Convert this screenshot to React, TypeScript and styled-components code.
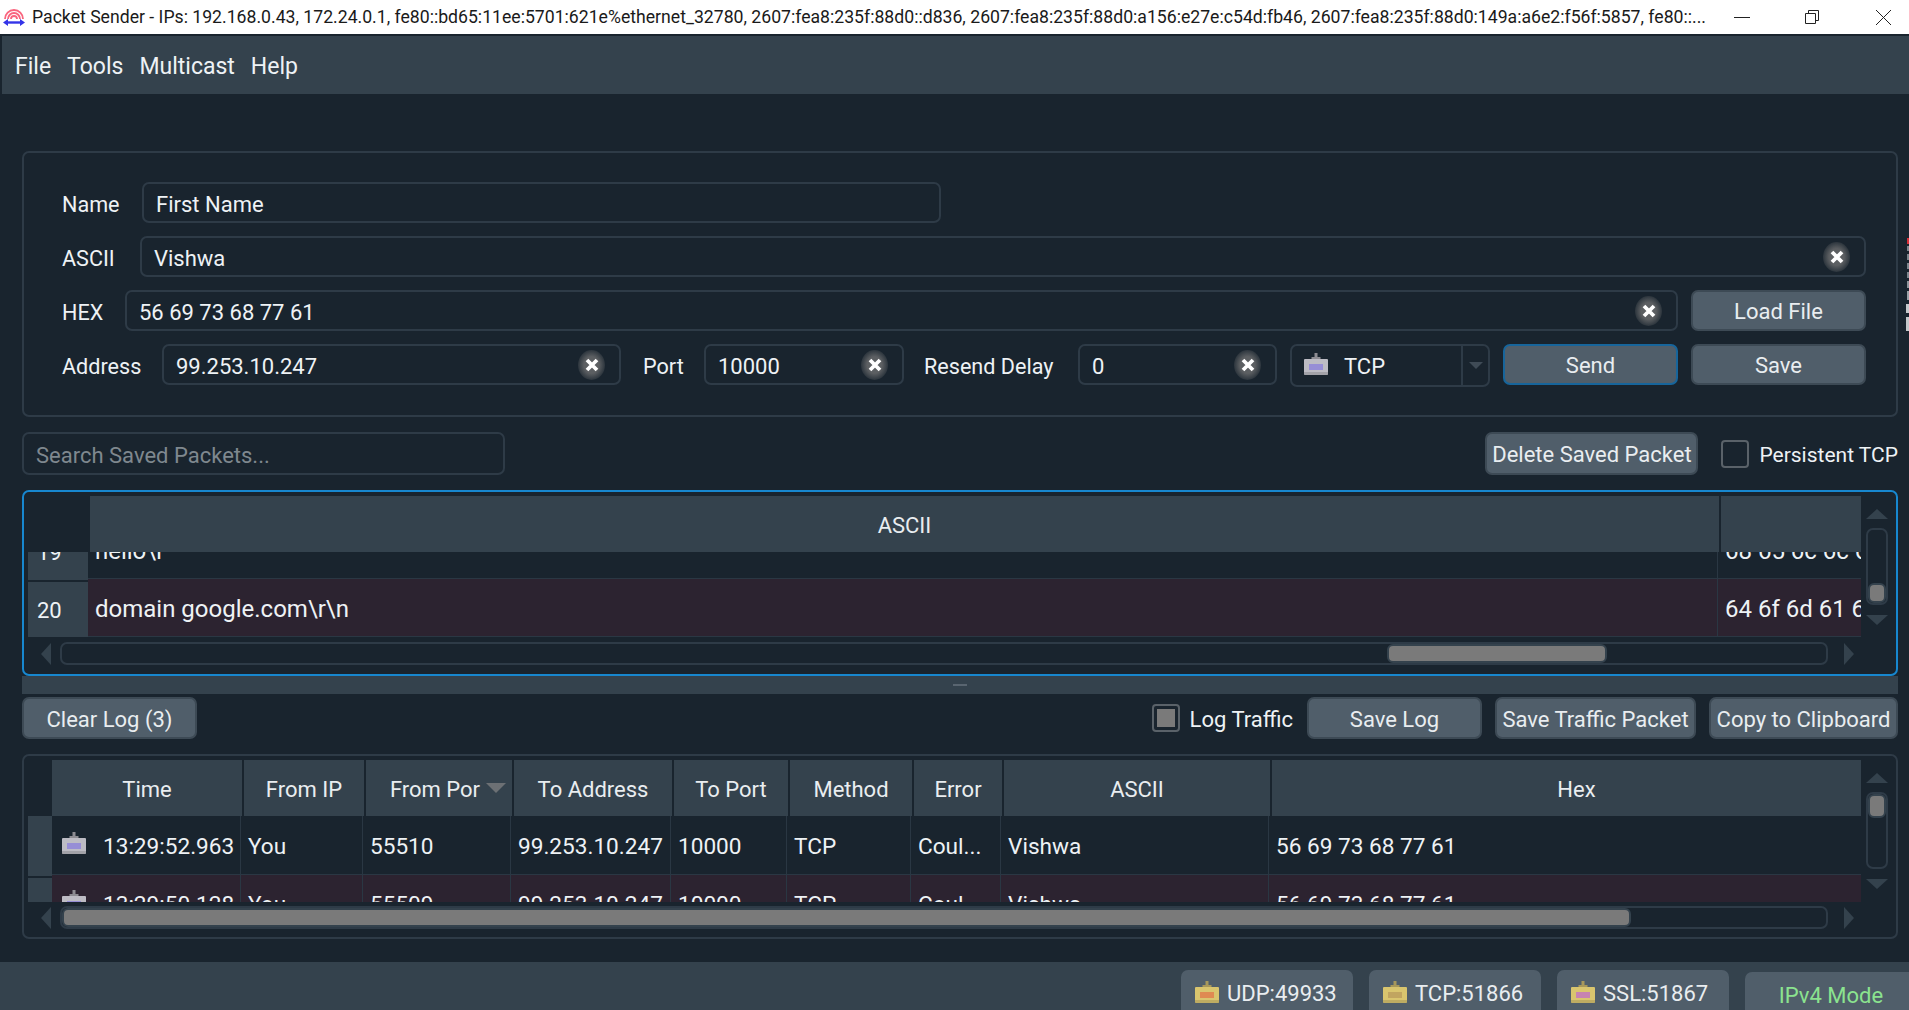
import React from 'react';
import styled, { createGlobalStyle } from 'styled-components';

const PANEL = '#34424d';
const BG = '#19242e';
const LINE = '#2e3b47';
const BTN = '#505e6a';
const TEXT = '#eef2f5';

const GlobalStyle = createGlobalStyle`
    html, body {
        margin: 0;
        padding: 0;
        background: ${BG};
        overflow: hidden;
    }
    * {
        box-sizing: border-box;
    }
`;

const Page = styled.div`
    position: relative;
    width: 1909px;
    height: 1010px;
    display: flex;
    flex-direction: column;
    overflow: hidden;
    background: ${BG};
    color: ${TEXT};
    font-family: Roboto, 'Liberation Sans', sans-serif;
    font-size: 22px;
`;

const TitleBar = styled.div`
    height: 34px;
    flex: none;
    display: flex;
    align-items: center;
    background: #fff;
    color: #1a1a1a;
    font-size: 17.65px;
    padding-left: 3px;
`;

const TitleText = styled.span`
    margin-left: 7px;
    width: 1687px;
    white-space: nowrap;
    overflow: hidden;
`;

const WindowButton = styled.svg`
    flex: none;
    width: 17px;
    height: 17px;
    margin-left: ${({ $ml }: { $ml: number }) => $ml}px;
    fill: none;
    stroke: #222;
    stroke-width: 1;
`;

const MenuBar = styled.div`
    height: 58px;
    flex: none;
    margin: 2px 0 0 2px;
    padding: 2px 0 0 13px;
    display: flex;
    align-items: center;
    gap: 16px;
    background: ${PANEL};
    font-size: 23px;
`;

const Main = styled.div`
    display: flex;
    flex-direction: column;
    padding: 57px 11px 0 22px;
`;

const GroupBox = styled.div`
    height: 266px;
    border: 2px solid ${LINE};
    border-radius: 7px;
    padding: 29px 30px 0 38px;
    display: flex;
    flex-direction: column;
    gap: 13px;
`;

const FormRow = styled.div`
    display: flex;
    align-items: flex-start;
    gap: 13px;
    height: 41px;
`;

const FieldLabel = styled.span<{ $w: number; $ml?: number }>`
    flex: none;
    width: ${({ $w }) => $w}px;
    margin-left: ${({ $ml }) => $ml ?? 0}px;
    font-size: 21.6px;
    line-height: 45px;
    white-space: nowrap;
`;

const TextBox = styled.div<{ $w?: number; $h?: number }>`
    flex: ${({ $w }) => ($w ? `none` : 1)};
    width: ${({ $w }) => ($w ? `${$w}px` : 'auto')};
    height: ${({ $h }) => $h ?? 41}px;
    display: flex;
    align-items: center;
    padding: 0 14px 0 12px;
    border: 2px solid ${LINE};
    border-radius: 7px;
`;

const BoxValue = styled.span`
    flex: 1;
    padding-top: 4px;
    white-space: nowrap;
`;

const Placeholder = styled(BoxValue)`
    color: #7f888f;
`;

const ClearGlow = styled.span`
    flex: none;
    width: 27px;
    height: 30px;
    border-radius: 50%;
    display: flex;
    align-items: center;
    justify-content: center;
    background: radial-gradient(closest-side, #5c5f62 55%, #2c353d 100%);
`;

const Button = styled.div<{ $w: number; $h?: number; $focus?: boolean }>`
    flex: none;
    width: ${({ $w }) => $w}px;
    height: ${({ $h }) => $h ?? 41}px;
    padding-top: 2px;
    display: flex;
    align-items: center;
    justify-content: center;
    background: ${BTN};
    border: 2px solid ${({ $focus }) => ($focus ? '#17659b' : '#3d4a55')};
    border-radius: 7px;
    color: #e9edf0;
    white-space: nowrap;
`;

const Combo = styled.div`
    flex: none;
    width: 200px;
    height: 43px;
    display: flex;
    align-items: center;
    border: 2px solid ${LINE};
    border-radius: 7px;
    padding-left: 12px;
`;

const ComboLabel = styled.span`
    flex: 1;
    margin-left: 16px;
    padding-top: 2px;
`;

const ComboArrow = styled.span`
    flex: none;
    width: 27px;
    height: 100%;
    border-left: 2px solid ${LINE};
    display: flex;
    align-items: center;
    justify-content: center;

    &::after {
        content: '';
        border-left: 7px solid transparent;
        border-right: 7px solid transparent;
        border-top: 7px solid #3f4b56;
    }
`;

const SearchRow = styled.div`
    margin-top: 15px;
    height: 43px;
    display: flex;
    align-items: center;
`;

const Spacer = styled.div`
    flex: 1;
`;

const CheckBox = styled.span<{ $checked?: boolean }>`
    flex: none;
    width: 28px;
    height: 28px;
    margin-left: ${({ $checked }) => ($checked ? 0 : 23)}px;
    border: 2px solid #5a6269;
    border-radius: 4px;
    padding: 3px;

    &::after {
        content: '';
        display: ${({ $checked }) => ($checked ? 'block' : 'none')};
        height: 100%;
        background: #7a7a7a;
    }
`;

const CheckLabel = styled.span<{ $size?: number }>`
    flex: none;
    margin-left: 10px;
    padding-top: 2px;
    font-size: ${({ $size }) => $size ?? 22}px;
    white-space: nowrap;
`;

const TableBox = styled.div<{ $focus?: boolean; $h: number }>`
    height: ${({ $h }) => $h}px;
    margin-top: 15px;
    border: 2px solid ${({ $focus }) => ($focus ? '#1787cf' : LINE)};
    border-radius: 7px;
    padding: 4px 8px 0 4px;
    display: flex;
    flex-direction: column;
`;

const TableTop = styled.div`
    display: flex;
    gap: 5px;
`;

const Viewport = styled.div<{ $h: number }>`
    flex: none;
    width: 1833px;
    height: ${({ $h }) => $h}px;
    display: flex;
    flex-direction: column;
    overflow: hidden;
`;

const HeaderRow = styled.div`
    flex: none;
    height: 56px;
    display: flex;
    position: relative;
    z-index: 1;
    background: ${BG};
`;

const Corner = styled.div<{ $w: number }>`
    flex: none;
    width: ${({ $w }) => $w}px;
`;

const HeaderCell = styled.div<{ $w: number; $shift?: number }>`
    position: relative;
    flex: ${({ $w }) => ($w ? 'none' : 1)};
    width: ${({ $w }) => $w}px;
    margin-right: 2px;
    padding: 2px 0 0 ${({ $shift }) => $shift ?? 0}px;
    background: ${PANEL};
    display: flex;
    align-items: center;
    justify-content: center;
    color: #e9edf0;
    white-space: nowrap;
    &:last-child {
        margin-right: 0;
    }
`;

const SortArrow = styled.span`
    position: absolute;
    right: 6px;
    top: 23px;
    border-left: 10px solid transparent;
    border-right: 10px solid transparent;
    border-top: 10px solid #6c7074;
`;

const HeaderOffset = styled.span`
    margin-right: 8px;
`;

const Body = styled.div<{ $size: number }>`
    flex: 1;
    min-height: 0;
    font-size: ${({ $size }) => $size}px;
`;

const Row = styled.div<{ $error?: boolean }>`
    height: 58px;
    display: flex;
    --row-bg: ${({ $error }) => ($error ? '#2c2330' : BG)};
`;

const SavedRow = styled(Row)`
    &:first-child {
        margin-top: -31px;
    }
`;

const LogRow = styled(Row)`
    &:first-child {
        height: 59px;
    }
    &:first-child > :first-child {
        margin-top: 0;
    }
`;

const RowHead = styled.div<{ $w: number }>`
    flex: none;
    width: ${({ $w }) => $w}px;
    margin: 3px 0 -1px;
    padding-left: 9px;
    background: ${PANEL};
    display: flex;
    align-items: center;
    font-size: 22px;
`;

const Cell = styled.div<{ $w: number }>`
    flex: ${({ $w }) => ($w ? 'none' : 1)};
    width: ${({ $w }) => $w}px;
    min-width: 0;
    padding: 2px 0 0 7px;
    display: flex;
    align-items: center;
    overflow: hidden;
    white-space: nowrap;
    background: var(--row-bg);
    border-bottom: 1px solid #2a3743;
    border-right: 1px solid #2a3743;
    &:last-child {
        border-right: none;
    }
`;

const RowIcon = styled.span`
    flex: none;
    display: flex;
    margin: -4px 0 0 3px;
`;

const TimeText = styled.span`
    margin-left: 17px;
`;

const VScroll = styled.div`
    flex: none;
    width: 22px;
    padding-top: 13px;
    display: flex;
    flex-direction: column;
    align-items: center;
`;

const ArrowUp = styled.span`
    flex: none;
    border-left: 11px solid transparent;
    border-right: 11px solid transparent;
    border-bottom: 10px solid ${PANEL};
`;

const ArrowDown = styled.span`
    flex: none;
    margin-top: 10px;
    border-left: 11px solid transparent;
    border-right: 11px solid transparent;
    border-top: 10px solid ${PANEL};
`;

const VTrack = styled.div`
    flex: none;
    width: 22px;
    height: 77px;
    margin-top: 9px;
    border: 2px solid ${LINE};
    border-radius: 7px;
`;

const VHandle = styled.div<{ $top: number; $h: number }>`
    width: 18px;
    height: ${({ $h }) => $h}px;
    margin-top: ${({ $top }) => $top}px;
    background: #7a7a7a;
    border: 2px solid ${PANEL};
    border-radius: 6px;
`;

const HScroll = styled.div`
    margin-top: ${({ $mt }: { $mt: number }) => $mt}px;
    width: 1826px;
    padding-left: 13px;
    display: flex;
    align-items: center;
`;

const ArrowLeft = styled.span`
    flex: none;
    border-top: 11px solid transparent;
    border-bottom: 11px solid transparent;
    border-right: 10px solid ${PANEL};
`;

const ArrowRight = styled.span`
    flex: none;
    margin-left: 16px;
    border-top: 11px solid transparent;
    border-bottom: 11px solid transparent;
    border-left: 10px solid ${PANEL};
`;

const HTrack = styled.div`
    flex: 1;
    height: 23px;
    margin-left: 9px;
    border: 2px solid ${LINE};
    border-radius: 7px;
`;

const HHandle = styled.div<{ $left: number; $w: number }>`
    width: ${({ $w }) => $w}px;
    height: 19px;
    margin-left: ${({ $left }) => $left}px;
    background: #7a7a7a;
    border: 2px solid ${PANEL};
    border-radius: 6px;
`;

const Splitter = styled.div`
    height: 18px;
    background: ${PANEL};
    display: flex;
    align-items: center;
    justify-content: center;

    &::after {
        content: '';
        width: 14px;
        height: 2px;
        background: #596570;
    }
`;

const LogToolbar = styled.div`
    height: 42px;
    margin-top: 3px;
    display: flex;
    align-items: center;
    gap: 13px;
`;

const LogCheck = styled.div`
    display: flex;
    align-items: center;
    margin-right: 1px;
`;

const StatusBar = styled.div`
    position: absolute;
    left: 0;
    right: 0;
    bottom: 0;
    height: 48px;
    padding-top: 8px;
    background: ${PANEL};
    display: flex;
    justify-content: flex-end;
    gap: 16px;
    overflow: hidden;
`;

const StatusChip = styled.div<{ $w: number; $green?: boolean }>`
    flex: none;
    width: ${({ $w }) => $w}px;
    height: 46px;
    margin-top: ${({ $green }) => ($green ? 2 : 0)}px;
    margin-right: ${({ $green }) => ($green ? -8 : 0)}px;
    padding-left: ${({ $green }) => ($green ? 0 : 14)}px;
    display: flex;
    align-items: center;
    justify-content: ${({ $green }) => ($green ? 'center' : 'flex-start')};
    gap: 8px;
    background: ${BTN};
    border-radius: 7px 7px 0 0;
    color: ${({ $green }) => ($green ? '#8be38f' : '#e9edf0')};
`;

const EdgeSliver = styled.svg`
    position: absolute;
    right: 0;
    top: 238px;
    width: 3px;
    height: 94px;
`;

const TITLE =
    'Packet Sender - IPs: 192.168.0.43, 172.24.0.1, fe80::bd65:11ee:5701:621e%ethernet_32780, 2607:fea8:235f:88d0::d836, 2607:fea8:235f:88d0:a156:e27e:c54d:fb46, 2607:fea8:235f:88d0:149a:a6e2:f56f:5857, fe80::...';

const AppLogo: React.FC = () => (
    <svg width="22" height="18" viewBox="0 0 22 18" fill="none">
        <g stroke="#f9657e" strokeWidth="1.8">
            <path d="M2 11a9 9 0 0 1 18 0" />
            <path d="M5 11a6 6 0 0 1 12 0" />
            <path d="M8 11a3 3 0 0 1 6 0" />
        </g>
        <path d="M3 14.5h16" stroke="#3434e8" strokeWidth="2.4" />
        <path d="M0 14.5 5 11v7zM22 14.5 17 11v7z" fill="#3434e8" />
    </svg>
);

const ClearIcon: React.FC = () => (
    <ClearGlow>
        <svg width="16" height="16" viewBox="0 0 16 16">
            <path d="M3 3l10 10M13 3L3 13" stroke="#fff" strokeWidth="3.8" />
        </svg>
    </ClearGlow>
);

const PortIcon: React.FC<{ body: string; shade: string; tag: string }> = ({ body, shade, tag }) => (
    <svg width="24" height="22" viewBox="0 0 24 22" style={{ flex: 'none', marginTop: -3 }}>
        <path d="M10.5 0h3v4h3v3h-9V4h3z" fill={shade} />
        <rect x="0" y="6" width="24" height="16" rx="1" fill={body} />
        <rect x="0" y="19" width="24" height="3" fill={shade} opacity="0.55" />
        <rect x="5" y="11" width="14" height="6" fill={tag} opacity="0.75" />
    </svg>
);

const TcpIcon: React.FC = () => <PortIcon body="#bdbcc4" shade="#8d8c92" tag="#8b7fdc" />;

const Field: React.FC<{ value: string; w?: number }> = ({ value, w }) => (
    <TextBox $w={w}>
        <BoxValue>{value}</BoxValue>
        <ClearIcon />
    </TextBox>
);

const LOG_HEAD = [
    { label: 'Time', w: 190 },
    { label: 'From IP', w: 120 },
    { label: 'From Por', w: 146, sorted: true },
    { label: 'To Address', w: 158 },
    { label: 'To Port', w: 114 },
    { label: 'Method', w: 122 },
    { label: 'Error', w: 88 },
    { label: 'ASCII', w: 266 },
    { label: 'Hex', w: 0, shift: 20 },
];

const LOG_WIDTHS = [189, 122, 148, 160, 116, 124, 90, 268, 0];

const LOG_ROWS = [
    ['13:29:52.963', 'You', '55510', '99.253.10.247', '10000', 'TCP', 'Coul...', 'Vishwa', '56 69 73 68 77 61'],
    ['13:29:50.128', 'You', '55509', '99.253.10.247', '10000', 'TCP', 'Coul...', 'Vishwa', '56 69 73 68 77 61'],
];

const App: React.FC = () => {
    return (
        <Page>
            <GlobalStyle />
            <TitleBar>
                <AppLogo />
                <TitleText>{TITLE}</TitleText>
                <WindowButton $ml={15} viewBox="0 0 17 17">
                    <path d="M0 8.5h16" />
                </WindowButton>
                <WindowButton $ml={53} viewBox="0 0 17 17">
                    <path d="M1.5 4.5h10v10h-10zM4.5 4.5v-3h10v10h-3" />
                </WindowButton>
                <WindowButton $ml={54} viewBox="0 0 17 17">
                    <path d="M1 1l15 15M16 1L1 16" />
                </WindowButton>
            </TitleBar>
            <MenuBar>
                <span>File</span>
                <span>Tools</span>
                <span>Multicast</span>
                <span>Help</span>
            </MenuBar>
            <Main>
                <GroupBox>
                    <FormRow>
                        <FieldLabel $w={67}>Name</FieldLabel>
                        <TextBox $w={799}>
                            <BoxValue>First Name</BoxValue>
                        </TextBox>
                    </FormRow>
                    <FormRow>
                        <FieldLabel $w={65}>ASCII</FieldLabel>
                        <Field value="Vishwa" />
                    </FormRow>
                    <FormRow>
                        <FieldLabel $w={50}>HEX</FieldLabel>
                        <Field value="56 69 73 68 77 61" />
                        <Button $w={175}>Load File</Button>
                    </FormRow>
                    <FormRow>
                        <FieldLabel $w={87}>Address</FieldLabel>
                        <Field value="99.253.10.247" w={459} />
                        <FieldLabel $w={48} $ml={9}>
                            Port
                        </FieldLabel>
                        <Field value="10000" w={200} />
                        <FieldLabel $w={141} $ml={7}>
                            Resend Delay
                        </FieldLabel>
                        <Field value="0" w={199} />
                        <Combo>
                            <TcpIcon />
                            <ComboLabel>TCP</ComboLabel>
                            <ComboArrow />
                        </Combo>
                        <Button $w={175} $focus>
                            Send
                        </Button>
                        <Button $w={175}>Save</Button>
                    </FormRow>
                </GroupBox>

                <SearchRow>
                    <TextBox $w={483} $h={43}>
                        <Placeholder>Search Saved Packets...</Placeholder>
                    </TextBox>
                    <Spacer />
                    <Button $w={213} $h={43}>
                        Delete Saved Packet
                    </Button>
                    <CheckBox />
                    <CheckLabel $size={21}>Persistent TCP</CheckLabel>
                </SearchRow>

                <TableBox $focus $h={186}>
                    <TableTop>
                        <Viewport $h={141}>
                            <HeaderRow>
                                <Corner $w={62} />
                                <HeaderCell $w={1629}>ASCII</HeaderCell>
                                <HeaderCell $w={0} />
                            </HeaderRow>
                            <Body $size={24}>
                                <SavedRow>
                                    <RowHead $w={60}>19</RowHead>
                                    <Cell $w={1630}>hello\r</Cell>
                                    <Cell $w={0}>68 65 6c 6c 6f 5c 72</Cell>
                                </SavedRow>
                                <SavedRow $error>
                                    <RowHead $w={60}>20</RowHead>
                                    <Cell $w={1630}>domain google.com\r\n</Cell>
                                    <Cell $w={0}>64 6f 6d 61 69 6e 20</Cell>
                                </SavedRow>
                            </Body>
                        </Viewport>
                        <VScroll>
                            <ArrowUp />
                            <VTrack>
                                <VHandle $top={53} $h={20} />
                            </VTrack>
                            <ArrowDown />
                        </VScroll>
                    </TableTop>
                    <HScroll $mt={5}>
                        <ArrowLeft />
                        <HTrack>
                            <HHandle $left={1325} $w={220} />
                        </HTrack>
                        <ArrowRight />
                    </HScroll>
                </TableBox>

                <Splitter />

                <LogToolbar>
                    <Button $w={175} $h={42}>
                        Clear Log (3)
                    </Button>
                    <Spacer />
                    <LogCheck>
                        <CheckBox $checked />
                        <CheckLabel>Log Traffic</CheckLabel>
                    </LogCheck>
                    <Button $w={175} $h={42}>
                        Save Log
                    </Button>
                    <Button $w={201} $h={42}>
                        Save Traffic Packet
                    </Button>
                    <Button $w={189} $h={42}>
                        Copy to Clipboard
                    </Button>
                </LogToolbar>

                <TableBox $h={185}>
                    <TableTop>
                        <Viewport $h={142}>
                            <HeaderRow>
                                <Corner $w={24} />
                                {LOG_HEAD.map((col) => (
                                    <HeaderCell key={col.label} $w={col.w} $shift={col.shift}>
                                        {col.sorted ? <HeaderOffset>{col.label}</HeaderOffset> : col.label}
                                        {col.sorted && <SortArrow />}
                                    </HeaderCell>
                                ))}
                            </HeaderRow>
                            <Body $size={22.6}>
                                {LOG_ROWS.map((row, r) => (
                                    <LogRow key={row[0]} $error={r === 1}>
                                        <RowHead $w={24} />
                                        {row.map((text, c) => (
                                            <Cell key={c} $w={LOG_WIDTHS[c]}>
                                                {c === 0 && (
                                                    <RowIcon>
                                                        <TcpIcon />
                                                    </RowIcon>
                                                )}
                                                {c === 0 ? <TimeText>{text}</TimeText> : text}
                                            </Cell>
                                        ))}
                                    </LogRow>
                                ))}
                            </Body>
                        </Viewport>
                        <VScroll>
                            <ArrowUp />
                            <VTrack>
                                <VHandle $top={0} $h={24} />
                            </VTrack>
                            <ArrowDown />
                        </VScroll>
                    </TableTop>
                    <HScroll $mt={4}>
                        <ArrowLeft />
                        <HTrack>
                            <HHandle $left={0} $w={1569} />
                        </HTrack>
                        <ArrowRight />
                    </HScroll>
                </TableBox>
            </Main>

            <StatusBar>
                <StatusChip $w={172}>
                    <PortIcon body="#d9c56e" shade="#a8985a" tag="#e0754a" />
                    UDP:49933
                </StatusChip>
                <StatusChip $w={172}>
                    <PortIcon body="#d9c56e" shade="#a8985a" tag="#b89a5c" />
                    TCP:51866
                </StatusChip>
                <StatusChip $w={172}>
                    <PortIcon body="#d9c56e" shade="#a8985a" tag="#c06cc8" />
                    SSL:51867
                </StatusChip>
                <StatusChip $w={172} $green>
                    IPv4 Mode
                </StatusChip>
            </StatusBar>

            <EdgeSliver viewBox="0 0 3 94">
                <rect x="1" y="0" width="2" height="6" fill="#d9303a" />
                <rect x="1" y="8" width="2" height="5" fill="#7d868d" />
                <rect x="1" y="16" width="2" height="6" fill="#7d868d" />
                <rect x="1" y="25" width="2" height="6" fill="#7d868d" />
                <rect x="1" y="34" width="2" height="6" fill="#7d868d" />
                <rect x="1" y="43" width="2" height="7" fill="#8d949a" />
                <rect x="1" y="53" width="2" height="9" fill="#9aa1a6" />
                <rect x="0" y="66" width="3" height="9" fill="#c4c8cb" />
                <rect x="0" y="79" width="3" height="14" fill="#c4c8cb" />
            </EdgeSliver>
        </Page>
    );
};

export default App;
